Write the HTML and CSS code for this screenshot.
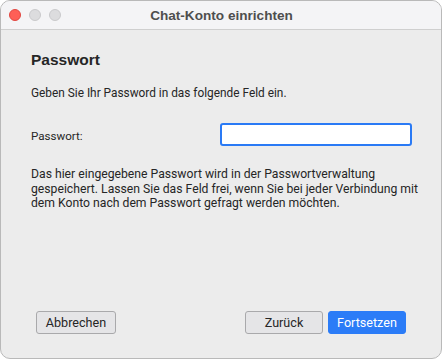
FILE: index.html
```html
<!DOCTYPE html>
<html lang="de">
<head>
<meta charset="utf-8">
<link rel="stylesheet" href="styles.css">
</head>
<body>
<div class="window">
  <div class="titlebar">
    <div class="lights">
      <span class="light red"></span>
      <span class="light gray"></span>
      <span class="light gray"></span>
    </div>
    <div class="title">Chat-Konto einrichten</div>
  </div>
  <div class="content">
    <h1 class="heading">Passwort</h1>
    <p class="intro">Geben Sie Ihr Password in das folgende Feld ein.</p>
    <div class="field-row">
      <label class="label">Passwort:</label>
      <div class="input"></div>
    </div>
    <p class="note">Das hier eingegebene Passwort wird in der Passwortverwaltung<br>gespeichert. Lassen Sie das Feld frei, wenn Sie bei jeder Verbindung mit<br>dem Konto nach dem Passwort gefragt werden möchten.</p>
    <div class="spacer"></div>
    <div class="buttons">
      <button class="btn wide">Abbrechen</button>
      <div class="right">
        <button class="btn">Zurück</button>
        <button class="btn primary">Fortsetzen</button>
      </div>
    </div>
  </div>
</div>
</body>
</html>
```
FILE: styles.css
```css
html, body {
  margin: 0;
  padding: 0;
  background: #ffffff;
}
body {
  font-family: Roboto, "Liberation Sans", Arial, sans-serif;
  color: #262626;
}
.window {
  box-sizing: border-box;
  width: 442px;
  height: 359px;
  border: 1px solid #b9b9b9;
  border-radius: 10px;
  overflow: hidden;
  background: #ececec;
  display: flex;
  flex-direction: column;
}
.titlebar {
  position: relative;
  height: 28px;
  background: #f4f4f6;
  border-bottom: 1px solid #cfcfcf;
  display: flex;
  align-items: center;
  justify-content: center;
  flex: none;
}
.lights {
  position: absolute;
  left: 8px;
  top: 8px;
  display: flex;
  gap: 8px;
}
.light {
  width: 12px;
  height: 12px;
  border-radius: 50%;
  box-sizing: border-box;
}
.red {
  background: #fe5f57;
  border: 1px solid #e14640;
}
.gray {
  background: #dcdcde;
  border: 1px solid #c9c9cb;
}
.title {
  font-family: "Liberation Sans", Arial, sans-serif;
  font-size: 13.6px;
  font-weight: bold;
  color: #4e4e4e;
  padding-left: 1px;
  padding-top: 1px;
}
.content {
  flex: 1;
  display: flex;
  flex-direction: column;
  padding: 20px 29px 24px 30px;
}
.heading {
  margin: 0;
  font-family: "Liberation Sans", Arial, sans-serif;
  font-size: 15.5px;
  font-weight: bold;
  color: #262626;
  line-height: 20px;
}
.intro {
  margin: 15px 0 0 0;
  font-size: 11.85px;
  line-height: 16px;
}
.field-row {
  display: flex;
  align-items: center;
  justify-content: space-between;
  margin-top: 22px;
}
.label {
  font-size: 11.6px;
  line-height: 16px;
  padding-top: 2px;
}
.input {
  box-sizing: border-box;
  width: 192px;
  height: 23px;
  background: #ffffff;
  border: 2px solid #2a7af5;
  border-radius: 3px;
}
.note {
  margin: 21px 0 0 0;
  font-size: 12.2px;
  line-height: 14.5px;
  white-space: nowrap;
}
.spacer {
  flex: 1;
}
.buttons {
  display: flex;
  justify-content: space-between;
  padding: 0 6px 0 5px;
}
.right {
  display: flex;
  gap: 5px;
}
.btn {
  box-sizing: border-box;
  height: 23px;
  width: 78px;
  font-family: Roboto, "Liberation Sans", Arial, sans-serif;
  font-size: 12.6px;
  color: #262626;
  background: #e5e5e7;
  border: 1px solid #a9a9ab;
  border-radius: 3px;
  padding: 0;
}
.btn.wide {
  width: 80px;
}
.btn.primary {
  background: #2b7cf7;
  border-color: #2b7cf7;
  color: #ffffff;
}
```
